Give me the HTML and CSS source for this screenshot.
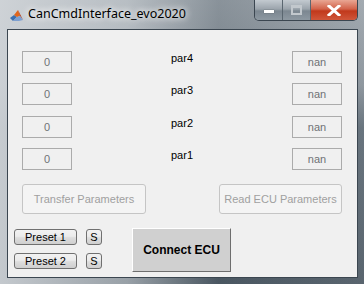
FILE: index.html
```html
<!DOCTYPE html>
<html lang="en">
<head>
    <meta charset="UTF-8">
    <title>CanCmdInterface_evo2020</title>
    <link rel="stylesheet" href="styles.css">
</head>
<body>
    <div class="window">
        <div class="titlebar">
            <svg class="app-icon" width="13" height="13" viewBox="0 0 13 13">
                <polygon points="0,9 4,6 7,8 3,12" fill="#3a6fb0"/>
                <polygon points="4,6 8,1 10,7 7,8" fill="#e0661c"/>
                <polygon points="8,1 13,11 10,7" fill="#b5320e"/>
                <polygon points="3,12 7,8 10,7 13,11 9,12" fill="#7d9fd0"/>
            </svg>
            <span class="title">CanCmdInterface_evo2020</span>
            <div class="win-buttons">
                <div class="win-btn min"><span class="dash"></span></div>
                <div class="win-btn max"><span class="box"></span></div>
                <div class="win-btn close">
                    <svg width="14" height="11" viewBox="0 0 14 11">
                        <path d="M2 1 L12 10 M12 1 L2 10" stroke="#fff" stroke-width="3" stroke-linecap="square"/>
                    </svg>
                </div>
            </div>
        </div>

        <div class="client">
            <div class="params">
                <div class="param-row">
                    <div class="edit">0</div>
                    <span class="label">par4</span>
                    <div class="edit">nan</div>
                </div>
                <div class="param-row">
                    <div class="edit">0</div>
                    <span class="label">par3</span>
                    <div class="edit">nan</div>
                </div>
                <div class="param-row">
                    <div class="edit">0</div>
                    <span class="label">par2</span>
                    <div class="edit">nan</div>
                </div>
                <div class="param-row">
                    <div class="edit">0</div>
                    <span class="label">par1</span>
                    <div class="edit">nan</div>
                </div>
            </div>

            <div class="actions">
                <button class="btn-disabled transfer">Transfer Parameters</button>
                <button class="btn-disabled read">Read ECU Parameters</button>
            </div>

            <div class="bottom">
                <div class="presets">
                    <div class="preset-row">
                        <button class="btn-small preset">Preset 1</button>
                        <button class="btn-small save">S</button>
                    </div>
                    <div class="preset-row">
                        <button class="btn-small preset">Preset 2</button>
                        <button class="btn-small save">S</button>
                    </div>
                </div>
                <button class="connect">Connect ECU</button>
            </div>
        </div>
    </div>
</body>
</html>
```

FILE: styles.css
```css
:root {
    --client-bg: #f0f0f0;
    --edit-border: #ababab;
    --text-primary: #000000;
    --text-disabled: #a0a0a0;
}

body {
    margin: 0;
    padding: 0;
    background: #ffffff;
    font-family: 'Liberation Sans', Arial, sans-serif;
}

.window {
    width: 364px;
    height: 284px;
    box-sizing: border-box;
    padding: 0 6px 6px 7px;
    display: flex;
    flex-direction: column;
    background:
        linear-gradient(to right, rgba(210, 214, 218, 0.9) 0%, rgba(190, 196, 201, 0.7) 35%, rgba(90, 102, 112, 0.4) 60%, rgba(150, 158, 165, 0.3) 100%),
        linear-gradient(to bottom, #a9b0b6 0%, #8c959d 30%, #56636e 45%, #3f4c57 100%);
}

.titlebar {
    height: 29px;
    display: flex;
    align-items: flex-start;
    position: relative;
}

.app-icon {
    margin: 9px 0 0 3px;
}

.title {
    margin: 5px 0 0 5px;
    font-family: 'Noto Sans', sans-serif;
    font-size: 12.5px;
    line-height: 18px;
    color: #000;
    text-shadow: 0 0 6px #fff, 0 0 8px #fff;
}

.win-buttons {
    position: absolute;
    top: 0;
    right: 0;
    display: flex;
    height: 20px;
    border: 1px solid #3b4650;
    border-top: none;
    border-radius: 0 0 5px 5px;
    overflow: hidden;
}

.win-btn {
    height: 20px;
    display: flex;
    align-items: center;
    justify-content: center;
}

.win-btn.min,
.win-btn.max {
    width: 27px;
    background: linear-gradient(to bottom, #c3cad0 0%, #9ba4ac 45%, #7c8791 55%, #8d98a1 100%);
    border-right: 1px solid #5a6670;
}

.win-btn .dash {
    width: 10px;
    height: 3px;
    margin-top: 3px;
    background: #fff;
    box-shadow: 0 0 1px #333;
}

.win-btn .box {
    width: 7px;
    height: 5px;
    border: 2px solid #c2c8cd;
    border-top-width: 3px;
}

.win-btn.close {
    width: 46px;
    background: linear-gradient(to bottom, #e9a693 0%, #d2634a 45%, #c1391c 55%, #d0563a 100%);
}

.client {
    flex: 1;
    background: var(--client-bg);
    border: 1px solid #3b4650;
    box-sizing: border-box;
    display: flex;
    flex-direction: column;
}

.params {
    display: flex;
    flex-direction: column;
    gap: 10px;
    padding: 21px 15px 0 14px;
}

.param-row {
    display: flex;
    justify-content: space-between;
    align-items: flex-start;
}

.param-row:nth-child(3) {
    margin-top: 1px;
}

.edit {
    width: 50px;
    height: 22px;
    box-sizing: border-box;
    border: 1px solid var(--edit-border);
    background: var(--client-bg);
    text-align: center;
    font-size: 11px;
    line-height: 20px;
    color: #6f7276;
}

.label {
    font-size: 11px;
    line-height: 14px;
    margin-top: 0;
    color: var(--text-primary);
}

.actions {
    display: flex;
    justify-content: space-between;
    padding: 14px 15px 0 14px;
}

button {
    font-family: 'Liberation Sans', Arial, sans-serif;
    margin: 0;
    padding: 0;
}

.btn-disabled {
    height: 30px;
    background: #f4f4f4;
    border: 1px solid #c5c5c5;
    border-radius: 3px;
    font-size: 11px;
    color: var(--text-disabled);
}

.transfer { width: 124px; }
.read { width: 123px; }

.bottom {
    display: flex;
    align-items: flex-start;
    padding: 14px 0 0 6px;
}

.presets {
    display: flex;
    flex-direction: column;
    gap: 8px;
    padding-top: 1px;
}

.preset-row {
    display: flex;
    gap: 9px;
}

.btn-small {
    height: 16px;
    box-sizing: border-box;
    border: 1px solid #707070;
    border-radius: 3px;
    background: linear-gradient(to bottom, #f2f2f2 0%, #ebebeb 45%, #dddddd 55%, #cfcfcf 100%);
    font-size: 11px;
    line-height: 14px;
    color: #000;
}

.preset { width: 63px; }
.save { width: 16px; }

.connect {
    width: 99px;
    height: 44px;
    margin-left: 30px;
    box-sizing: border-box;
    background: #d0d0d0;
    border: 1px solid;
    border-color: #ffffff #6e6e6e #6e6e6e #ffffff;
    font-size: 12px;
    font-weight: bold;
    color: #000;
}
```
